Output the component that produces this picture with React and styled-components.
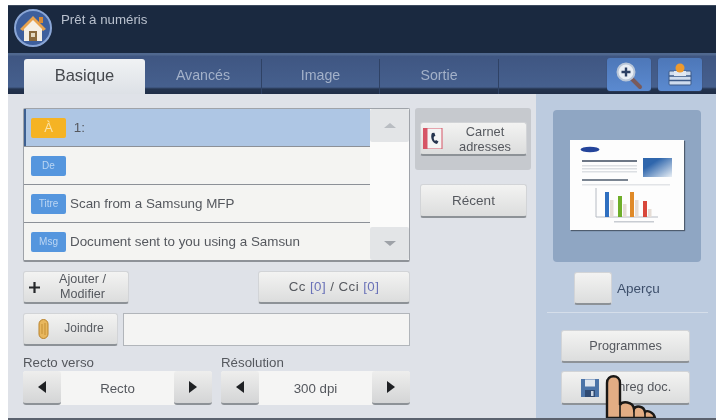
import styled, { createGlobalStyle } from "styled-components";

const GlobalStyle = createGlobalStyle`
html, body {
    margin: 0;
    padding: 0;
    background: #fff;
}
body {
    font-family: "Liberation Sans", Arial, sans-serif;
    color: #55585e;
}
`

const Screen = styled.div`
width: 708px;
height: 415px;
margin: 5px 0 0 8px;
display: flex;
flex-direction: column;
overflow: hidden;
position: relative;
border-bottom: 2px solid #5b626e;
box-sizing: border-box;
filter: blur(.45px);
`

const StatusBar = styled.div`
height: 48px;
flex: none;
background: #1a2940;
border-top: 1px solid #3c4a5e;
box-sizing: border-box;
display: flex;
align-items: flex-start;
padding: 2px 0 0 5px;
gap: 8px;
color: #b9c1ce;
font-size: 13.3px;
span { margin-top: 4px; }
`

const TabBar = styled.div`
height: 41px;
flex: none;
box-sizing: border-box;
background: linear-gradient(#50688f 0, #50688f 2px, #3f5682 3px, #46608e 34px, #24344f 36px, #1f2d47 100%);
display: flex;
padding: 6px 14px 0 16px;
`

const Tab = styled.div`
width: ${p => p.$w}px;
height: 35px;
box-sizing: border-box;
display: flex;
align-items: center;
justify-content: center;
padding-bottom: 3px;
font-size: ${p => p.$active ? 16.5 : 14.2}px;
color: ${p => p.$active ? "#45484d" : "#a3b1c9"};
background: ${p => p.$active ? "linear-gradient(#f0f2f4, #dde1e6)" : "transparent"};
border-radius: ${p => p.$active ? "3px 3px 0 0" : 0};
border-right: ${p => p.$active ? "none" : "1px solid #2f4265"};
`

const TabTools = styled.div`
margin-left: auto;
display: flex;
gap: 7px;
margin-top: -1px;
`

const ToolButton = styled.div`
width: 44px;
height: 33px;
border-radius: 3px;
display: flex;
align-items: center;
justify-content: center;
background: linear-gradient(#4d77b8, #5b8ad0);
box-shadow: 0 1px 1px #2a3a58;
`

const Body = styled.div`
flex: 1;
display: flex;
min-height: 0;
`

const LeftPane = styled.div`
width: 528px;
flex: none;
box-sizing: border-box;
padding: 14px 5px 0 15px;
background: #dfe2e8;
display: flex;
flex-direction: column;
`

const RightPane = styled.div`
flex: 1;
box-sizing: border-box;
padding: 16px 6px 0 8px;
background: #bccbdf;
display: flex;
flex-direction: column;
align-items: center;
`

const TopRow = styled.div`
display: flex;
gap: 5px;
height: 154px;
`

const RecipientList = styled.div`
width: 387px;
box-sizing: border-box;
display: flex;
background: #f4f4f2;
border: 1px solid #9fa3a9;
border-bottom: 2px solid #8e9298;
border-radius: 2px;
`

const Rows = styled.div`
flex: 1;
display: flex;
flex-direction: column;
`

const Row = styled.div`
flex: 1;
display: flex;
align-items: center;
gap: 4px;
padding-left: 7px;
font-size: 13.4px;
color: #55585e;
box-sizing: border-box;
background: ${p => p.$selected ? "#aec6e4" : "#f4f4f2"};
border-bottom: ${p => p.$last ? "none" : "1px solid #8c9097"};
box-shadow: ${p => p.$selected ? "inset 2px 0 0 #3d5f90" : "none"};
`

const Tag = styled.span`
width: 35px;
height: 20px;
flex: none;
display: flex;
align-items: center;
justify-content: center;
border-radius: 2px;
font-size: ${p => p.$active ? 13 : 10}px;
color: ${p => p.$active ? "#fbe3a8" : "#bcd6f3"};
background: ${p => p.$active ? "#f5b324" : "#5596de"};
`

const ScrollTrack = styled.div`
width: 39px;
flex: none;
display: flex;
flex-direction: column;
justify-content: space-between;
background: #fbfbfa;
`

const ScrollButton = styled.div`
height: 33px;
display: flex;
align-items: center;
justify-content: center;
background: #e3e5e7;
border-radius: 2px;
`

const Triangle = styled.span`
width: 0;
height: 0;
border-left: ${p => p.$size}px solid transparent;
border-right: ${p => p.$size}px solid transparent;
${p => p.$up ? "border-bottom" : "border-top"}: ${p => p.$size - 1}px solid ${p => p.$color};
`

const Arrow = styled.span`
width: 0;
height: 0;
border-top: 6px solid transparent;
border-bottom: 6px solid transparent;
${p => p.$left ? "border-right" : "border-left"}: 8px solid #1f2124;
`

const Button = styled.div`
width: ${p => p.$w ? p.$w + "px" : "auto"};
height: ${p => p.$h || 33}px;
box-sizing: border-box;
flex: none;
display: flex;
align-items: center;
justify-content: ${p => p.$justify || "center"};
gap: ${p => p.$gap || 0}px;
padding: 0 ${p => p.$pad || 0}px;
font-size: ${p => p.$size || 12}px;
line-height: 1.15;
text-align: center;
color: #55585e;
border-radius: 3px;
background: linear-gradient(#f3f3f2, #dcdddd);
border: 1px solid #d2d4d7;
border-bottom: 2px solid #8d9297;
`

const CcLabel = styled.span`
letter-spacing: .45px;
b {
    font-weight: normal;
    color: #6a72b8;
}
`

const EditLabel = styled.span`
flex: 1;
font-size: 12.6px;
line-height: 15px;
`

const SideColumn = styled.div`
width: 116px;
display: flex;
flex-direction: column;
`

const BookPanel = styled.div`
height: 62px;
box-sizing: border-box;
padding: 14px 4px 0 5px;
background: #c6c9ce;
border-radius: 3px;
margin-bottom: 14px;
`

const SideButtonWrap = styled.div`
padding: 0 4px 0 5px;
`

const BookLabel = styled.span`
flex: 1;
font-size: 12.8px;
line-height: 15px;
text-align: center;
padding-left: 3px;
`

const ButtonRow = styled.div`
width: 387px;
display: flex;
justify-content: space-between;
margin-top: 9px;
`

const AttachRow = styled.div`
width: 387px;
display: flex;
gap: 5px;
margin-top: 9px;
`

const AttachField = styled.div`
flex: 1;
height: 33px;
box-sizing: border-box;
background: #f4f4f3;
border: 1px solid #b1b5ba;
`

const StepperRow = styled.div`
display: flex;
gap: 9px;
margin-top: 8px;
`

const StepperGroup = styled.div`
width: 189px;
`

const StepperLabel = styled.div`
font-size: 13.3px;
height: 17px;
line-height: 17px;
color: #55585e;
`

const Stepper = styled.div`
height: 34px;
display: flex;
background: #f5f5f4;
border-radius: 3px;
`

const StepButton = styled.div`
width: 38px;
flex: none;
display: flex;
align-items: center;
justify-content: center;
border-radius: 3px;
background: linear-gradient(#eeeeed, #d4d5d6);
border-bottom: 2px solid #8d9297;
box-sizing: border-box;
`

const StepValue = styled.div`
flex: 1;
display: flex;
align-items: center;
justify-content: center;
font-size: 13.3px;
color: #55585e;
`

const PreviewPanel = styled.div`
width: 148px;
height: 152px;
flex: none;
box-sizing: border-box;
padding-top: 30px;
display: flex;
justify-content: center;
align-items: flex-start;
background: #8fa6c3;
border-radius: 4px;
`

const PreviewSheet = styled.svg`
display: block;
box-shadow: 1px 1px 1px #4e5c6e;
`

const PreviewRow = styled.div`
align-self: flex-start;
display: flex;
align-items: center;
gap: 5px;
margin: 10px 0 0 30px;
font-size: 13.5px;
color: #3d4f6b;
`

const Divider = styled.div`
width: 161px;
height: 1px;
margin-top: 7px;
background: #d5deea;
`

const ProgramColumn = styled.div`
align-self: flex-start;
display: flex;
flex-direction: column;
gap: 8px;
margin: 17px 0 0 17px;
`

const HandOverlay = styled.svg`
position: absolute;
left: 592px;
bottom: 0;
`

function HomeIcon() {
    return (
        <svg width="40" height="40" viewBox="0 0 40 40">
            <circle cx="20" cy="20" r="18" fill="#3e5f9c" stroke="#8aa6d6" strokeWidth="2" />
            <path d="M7 21 L20 8 L33 21 L30 23 L20 13 L10 23 Z" fill="#e8a24c" />
            <path d="M11 21 L20 12 L29 21 V33 H11 Z" fill="#f5efe4" />
            <rect x="26" y="9" width="4" height="6" fill="#d98a35" />
            <rect x="16" y="23" width="8" height="10" fill="#8a6a3e" />
            <rect x="18" y="25" width="4" height="4" fill="#e2d8c0" />
        </svg>
    )
}

function ZoomIcon() {
    return (
        <svg width="30" height="30" viewBox="0 0 30 30">
            <path d="M17 18 L26 27" stroke="#7a5a5a" strokeWidth="4" strokeLinecap="round" />
            <circle cx="12" cy="12" r="8.5" fill="#e9eef5" stroke="#b9c6d8" strokeWidth="2" />
            <path d="M12 7.5 V16.5 M7.5 12 H16.5" stroke="#2c3f63" strokeWidth="2.4" />
        </svg>
    )
}

function StackIcon() {
    return (
        <svg width="26" height="26" viewBox="0 0 26 26">
            <rect x="2" y="9" width="22" height="14" rx="1" fill="#cfdcee" stroke="#3d5a88" />
            <path d="M2 14 H24 M2 18.5 H24" stroke="#3d5a88" strokeWidth="1.4" />
            <path d="M7 9 H19 V14 H7 Z" fill="#dfe7f2" />
            <circle cx="13" cy="6" r="4.5" fill="#ee9a2e" />
        </svg>
    )
}

function PlusIcon() {
    return (
        <svg width="13" height="13" viewBox="0 0 13 13">
            <path d="M6.5 1 V12 M1 6.5 H12" stroke="#26282b" strokeWidth="2.2" />
        </svg>
    )
}

function ClipIcon() {
    return (
        <svg width="13" height="22" viewBox="0 0 13 22">
            <path d="M2 6 a4.5 4.5 0 0 1 9 0 V16 a4.5 4.5 0 0 1 -9 0 Z" fill="#e8b75e" stroke="#b9822a" strokeWidth="1" />
            <path d="M5 6 V16 M8 5 V17" stroke="#c48f35" strokeWidth="1" />
        </svg>
    )
}

function BookIcon() {
    return (
        <svg width="20" height="21" viewBox="0 0 20 21">
            <rect x="0" y="0" width="5" height="21" fill="#d65566" />
            <rect x="4" y="0" width="15" height="21" fill="#f4f4f4" stroke="#d65566" strokeWidth="1" />
            <path d="M9 5 C7 9 9 15 14 16 L15.5 13.5 L13 12 L12 13 C10.8 12 10.4 10 11 8.6 L12.4 8 L11.4 4.8 Z" fill="#26344f" />
        </svg>
    )
}

function FloppyIcon() {
    return (
        <svg width="20" height="20" viewBox="0 0 20 20">
            <path d="M1 1 H19 V19 H1 Z" fill="#4c74a8" />
            <rect x="5" y="1.5" width="10" height="7" fill="#dfe6ef" />
            <rect x="5" y="12" width="10" height="7" fill="#2f4a72" />
            <rect x="11" y="13" width="2.5" height="5" fill="#cbd6e4" />
        </svg>
    )
}

function PreviewDoc() {
    const bars = [
        [35, 25, "#2f6fc0"],
        [48, 21, "#6fae2a"],
        [60, 25, "#e08a28"],
        [73, 16, "#d8483c"],
    ]
    return (
        <PreviewSheet width="114" height="90" viewBox="0 0 114 90">
            <rect width="114" height="90" fill="#fdfdfd" />
            <ellipse cx="20" cy="9.5" rx="9.5" ry="2.8" fill="#24449a" />
            <rect x="12" y="20" width="55" height="2" fill="#6d7786" />
            <rect x="12" y="25" width="55" height="1.5" fill="#dcdfe3" />
            <rect x="12" y="28" width="55" height="1.5" fill="#dcdfe3" />
            <rect x="12" y="31" width="55" height="1.5" fill="#dcdfe3" />
            <defs>
                <linearGradient id="sky" x1="0" y1="0" x2="1" y2="1">
                    <stop offset="0.3" stopColor="#2f66ac" />
                    <stop offset="1" stopColor="#e9eff5" />
                </linearGradient>
            </defs>
            <rect x="73" y="18" width="29" height="19" fill="url(#sky)" />
            <rect x="12" y="39" width="46" height="2" fill="#7b8592" />
            <rect x="12" y="44" width="88" height="1.5" fill="#e2e4e7" />
            <path d="M26 48 V77 H88" stroke="#b7bcc4" fill="none" strokeWidth="1" />
            {bars.map(([x, h, color]) => (
                <g key={x}>
                    <rect x={x + 5} y={77 - h + 8} width="3.5" height={h - 8} fill="#e6ddd6" />
                    <rect x={x} y={77 - h} width="4" height={h} fill={color} />
                </g>
            ))}
            <rect x="44" y="81" width="40" height="1.5" fill="#c8ccd2" />
        </PreviewSheet>
    )
}

function Hand() {
    return (
        <HandOverlay width="58" height="44" viewBox="0 0 58 44">
            <path
                d="M7 44 V9 C7 0 20 0 20 9 V31 C22 27 33 27 34 35 C36 31 44 32 45 38 C47 36 54 38 55 44 Z"
                fill="#e3ad84"
                stroke="#1a1816"
                strokeWidth="2.4"
            />
            <path d="M20 31 V44 M34 35 V44 M45 38 V44" stroke="#1a1816" strokeWidth="1.6" />
        </HandOverlay>
    )
}

export default function App() {
    return (
        <>
            <GlobalStyle />
            <Screen>
                <StatusBar>
                    <HomeIcon />
                    <span>Prêt à numéris</span>
                </StatusBar>
                <TabBar>
                    <Tab $active $w={121}>Basique</Tab>
                    <Tab $w={117}>Avancés</Tab>
                    <Tab $w={118}>Image</Tab>
                    <Tab $w={119}>Sortie</Tab>
                    <TabTools>
                        <ToolButton><ZoomIcon /></ToolButton>
                        <ToolButton><StackIcon /></ToolButton>
                    </TabTools>
                </TabBar>
                <Body>
                    <LeftPane>
                        <TopRow>
                            <RecipientList>
                                <Rows>
                                    <Row $selected><Tag $active>À</Tag><span>&nbsp;1:</span></Row>
                                    <Row><Tag>De</Tag></Row>
                                    <Row><Tag>Titre</Tag><span>Scan from a Samsung MFP</span></Row>
                                    <Row $last><Tag>Msg</Tag><span>Document sent to you using a Samsun</span></Row>
                                </Rows>
                                <ScrollTrack>
                                    <ScrollButton><Triangle $up $size={6} $color="#b9bdc2" /></ScrollButton>
                                    <ScrollButton><Triangle $size={6} $color="#9ea2a8" /></ScrollButton>
                                </ScrollTrack>
                            </RecipientList>
                            <SideColumn>
                                <BookPanel>
                                    <Button $h={34} $pad={2}>
                                        <BookIcon />
                                        <BookLabel>Carnet<br />adresses</BookLabel>
                                    </Button>
                                </BookPanel>
                                <SideButtonWrap>
                                    <Button $h={34} $size={13.5}>Récent</Button>
                                </SideButtonWrap>
                            </SideColumn>
                        </TopRow>
                        <ButtonRow>
                            <Button $w={106} $pad={4} $justify="flex-start">
                                <PlusIcon />
                                <EditLabel>Ajouter /<br />Modifier</EditLabel>
                            </Button>
                            <Button $w={152} $size={13.3}>
                                <CcLabel>Cc <b>[0]</b> / Cci <b>[0]</b></CcLabel>
                            </Button>
                        </ButtonRow>
                        <AttachRow>
                            <Button $w={95} $gap={14} $size={12}>
                                <ClipIcon />
                                <span>Joindre</span>
                            </Button>
                            <AttachField />
                        </AttachRow>
                        <StepperRow>
                            <StepperGroup>
                                <StepperLabel>Recto verso</StepperLabel>
                                <Stepper>
                                    <StepButton><Arrow $left /></StepButton>
                                    <StepValue>Recto</StepValue>
                                    <StepButton><Arrow /></StepButton>
                                </Stepper>
                            </StepperGroup>
                            <StepperGroup>
                                <StepperLabel>Résolution</StepperLabel>
                                <Stepper>
                                    <StepButton><Arrow $left /></StepButton>
                                    <StepValue>300 dpi</StepValue>
                                    <StepButton><Arrow /></StepButton>
                                </Stepper>
                            </StepperGroup>
                        </StepperRow>
                    </LeftPane>
                    <RightPane>
                        <PreviewPanel><PreviewDoc /></PreviewPanel>
                        <PreviewRow>
                            <Button $w={38} />
                            <span>Aperçu</span>
                        </PreviewRow>
                        <Divider />
                        <ProgramColumn>
                            <Button $w={129} $size={12.7}>Programmes</Button>
                            <Button $w={129} $h={34} $size={12.7} $gap={10}>
                                <FloppyIcon />
                                <span>Enreg doc.</span>
                            </Button>
                        </ProgramColumn>
                    </RightPane>
                </Body>
                <Hand />
            </Screen>
        </>
    )
}
